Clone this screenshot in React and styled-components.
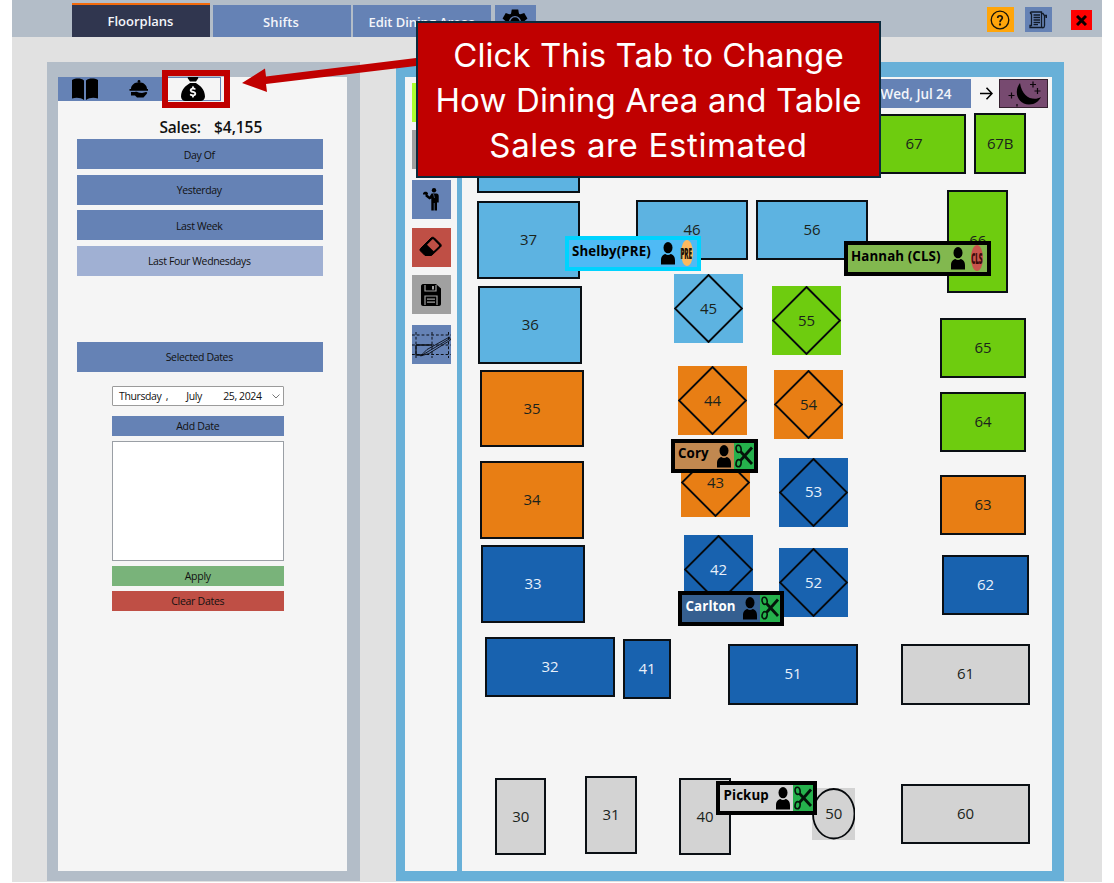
import React from "react";
import styled, { createGlobalStyle, css } from "styled-components";
import { FaSackDollar } from "react-icons/fa6";

const Global = createGlobalStyle`
  * { box-sizing: border-box; }
  body { margin: 0; background: #fff; overflow: hidden; }
  button { font: inherit; border: 0; padding: 0; margin: 0; color: inherit; }
  svg { display: block; flex: none; }
`;

const C = {
  steel: "#b3bdc8",
  blue: "#6582b5",
  navy: "#30364f",
  sky: "#68b0d8",
  panel: "#f5f5f5",
  red: "#bf4f45",
};

const Window = styled.div`
  position: relative;
  width: 1090px;
  height: 882px;
  margin-left: 12px;
  background: #e1e1e1;
  font-family: "Open Sans", "Noto Sans", sans-serif;
  color: #111;
`;
const TopBar = styled.header`
  display: flex;
  align-items: flex-end;
  height: 37px;
  padding-left: 60px;
  background: ${C.steel};
`;
const MainTab = styled.button`
  width: 138px;
  height: ${(p) => (p.$active ? 34.5 : 32)}px;
  margin-right: 2.5px;
  padding-top: ${(p) => (p.$active ? 1 : 2)}px;
  padding-right: 1px;
  border-top: ${(p) => (p.$active ? "2px solid #f26a0c" : "0")};
  background: ${(p) => (p.$active ? C.navy : C.blue)};
  color: #f3f5fa;
  font-size: 13px;
  font-weight: 600;
  letter-spacing: ${(p) => p.$track || 0}px;
`;
const GearTab = styled.button`
  width: 41px;
  height: 32px;
  margin-left: 1px;
  background: ${C.blue};
  display: flex;
  justify-content: center;
  padding-top: 4px;
  color: #000;
`;
const WindowTools = styled.div`
  display: flex;
  align-items: center;
  align-self: flex-start;
  margin: 7px 10.5px 0 auto;
`;
const WindowButton = styled.button`
  display: flex;
  align-items: center;
  justify-content: center;
  width: ${(p) => p.$w}px;
  height: ${(p) => p.$h}px;
  margin-left: ${(p) => p.$gap || 0}px;
  margin-top: ${(p) => p.$drop || 0}px;
  background: ${(p) => p.$bg};
`;
const Body = styled.main`
  display: flex;
  gap: 36px;
  padding: 25px 38px 0 34.5px;
`;
const Sidebar = styled.aside`
  width: 313.5px;
  height: 819px;
  border: solid ${C.steel};
  border-width: 15px 13.5px 10.5px 11.5px;
  background: ${C.panel};
`;
const SideTabs = styled.nav`
  display: flex;
  height: 24px;
`;
const SideTab = styled.button`
  display: flex;
  align-items: center;
  justify-content: center;
  width: ${(p) => p.$w}px;
  background: ${(p) => (p.$active ? C.panel : C.blue)};
  border: ${(p) => (p.$active ? `1px solid ${C.blue}` : "0")};
  color: #000;
`;
const SalesLine = styled.div`
  display: flex;
  gap: 13.5px;
  height: 38.4px;
  padding: 15px 0 0 102px;
  font-size: 15.5px;
  line-height: 22px;
  font-weight: 600;
  color: #111;
`;
const SalesLabel = styled.span`
  width: 41px;
  letter-spacing: -0.2px;
`;
const SalesValue = styled.span`
  letter-spacing: -0.05px;
`;
const RangeList = styled.div`
  display: flex;
  flex-direction: column;
  gap: 5.4px;
  padding: 0 24px 0 19px;
`;
const RangeButton = styled.button`
  height: 30px;
  background: ${(p) => (p.$pale ? "#a0b0d3" : C.blue)};
  font-size: 10.5px;
  font-weight: 500;
  letter-spacing: -0.36px;
  padding-right: 1px;
  padding-top: 1px;
  margin-top: ${(p) => p.$top || 0}px;
`;
const DateTools = styled.div`
  display: flex;
  flex-direction: column;
  width: 172.5px;
  margin: 14.5px 0 0 54px;
`;
const DatePicker = styled.div`
  display: flex;
  align-items: center;
  height: 20px;
  padding: 0 3px 0 6.5px;
  border: 1px solid #9b9b9b;
  border-radius: 1px;
  background: #fff;
  font-size: 10.5px;
  letter-spacing: -0.38px;
`;
const DatePart = styled.span`
  width: ${(p) => p.$w}px;
  white-space: nowrap;
`;
const DateButton = styled.button`
  height: 20px;
  margin-top: ${(p) => p.$top}px;
  background: ${(p) => p.$bg};
  font-size: 10.5px;
  font-weight: 500;
  letter-spacing: -0.28px;
`;
const DateList = styled.div`
  height: 120px;
  margin-top: 5px;
  border: 1px solid #9a9fa5;
  background: #fff;
`;
const Workspace = styled.section`
  display: flex;
  width: 668px;
  height: 819px;
  border: solid ${C.sky};
  border-width: 15px 12px 10.5px 9.5px;
  background: ${C.panel};
`;
const Tools = styled.div`
  display: flex;
  flex-direction: column;
  width: 56.5px;
  padding: 5.5px 0 0 6.5px;
  border-right: 5px solid ${C.sky};
`;
const Tool = styled.button`
  display: flex;
  align-items: center;
  justify-content: center;
  width: 39px;
  height: 39px;
  flex: none;
  margin-bottom: ${(p) => p.$gap}px;
  background: ${(p) => p.$bg};
`;
const Floor = styled.div`
  flex: 1;
`;
const FloorHeader = styled.div`
  display: flex;
  justify-content: flex-end;
  align-items: center;
  height: 31px;
  padding: 2px 4px 0 0;
`;
const DayButton = styled.button`
  width: 110px;
  height: 29px;
  background: ${C.blue};
  color: #f3f5fa;
  font-size: 13.5px;
  font-weight: 600;
  letter-spacing: -0.05px;
  padding-top: 1px;
`;
const NextDay = styled.div`
  width: 28px;
  display: flex;
  justify-content: center;
  padding-left: 2px;
`;
const NightButton = styled.button`
  width: 49px;
  height: 29px;
  background: #774a70;
  border: 1px solid #35202f;
`;
const Canvas = styled.div`
  position: relative;
  height: 762px;
`;
const Table = styled.div`
  position: absolute;
  display: flex;
  align-items: center;
  justify-content: center;
  background: ${(p) => p.$bg};
  color: ${(p) => (p.$light ? "#e8f0fa" : "#1b241c")};
  font-size: 15px;
  letter-spacing: -0.2px;
  padding: 0 0 2px 1px;
  ${(p) => p.$shape === "box" && css`
    border: 2px solid #0a0f14;
  `}
`;
const Outline = styled.svg`
  position: absolute;
  inset: 0;
`;
const TableNo = styled.span`
  position: relative;
`;
const Server = styled.div`
  position: absolute;
  display: flex;
  height: 34.5px;
  border: 4px solid ${(p) => p.$border || "#000"};
  background: ${(p) => p.$bg};
  color: ${(p) => (p.$light ? "#fff" : "#000")};
  font-size: 13.3px;
  line-height: 16px;
  font-weight: 700;
  letter-spacing: 0.12px;
  padding: 0 0 0 3.5px;
  white-space: nowrap;
`;
const ServerName = styled.span`
  flex: 1;
  padding-top: 2.5px;
`;
const PersonSlot = styled.span`
  width: 17px;
  padding: 2px 0 0 0;
`;
const Cut = styled.span`
  width: 20px;
  background: #25b14c;
`;
const Badge = styled.span`
  display: flex;
  align-items: center;
  justify-content: center;
  width: 12px;
  height: 26px;
  margin: 0 4px 0 3px;
  border-radius: 50%;
  background: ${(p) => p.$bg};
  color: ${(p) => p.$ink};
`;
const BadgeText = styled.span`
  flex: none;
  font-size: 16px;
  font-weight: 800;
  letter-spacing: -0.5px;
  transform: scaleX(0.4);
`;
const Highlight = styled.div`
  position: absolute;
  left: 150px;
  top: 70px;
  width: 68px;
  height: 38px;
  border: 6px solid #c00000;
`;
const ArrowLine = styled.svg`
  position: absolute;
  left: 228px;
  top: 50px;
`;
const Callout = styled.div`
  position: absolute;
  left: 404px;
  top: 21px;
  width: 465px;
  height: 157px;
  padding-top: 9.5px;
  border: 2px solid #0b2a3c;
  background: #c00000;
  color: #fff;
  font-family: Inter, "Liberation Sans", sans-serif;
  font-size: 33px;
  line-height: 45px;
  text-align: center;
  white-space: nowrap;
`;
const CalloutLine = styled.div`
  letter-spacing: ${(p) => p.$track}px;
`;

const GearIcon = () => (
  <svg width="26" height="26" viewBox="0 0 26 26">
    {[0, 60, 120].map((a) => (
      <path key={a} transform={`rotate(${a} 13 13)`} d="M9.800 0.500H16.200L17.200 6V20L16.200 25.500H9.800L8.800 20V6Z" />
    ))}
    <circle cx="13" cy="13" r="9.300" />
    <circle cx="13" cy="13" r="5.400" fill="none" stroke="#6582b5" strokeWidth="1.300" />
  </svg>
);
const BookIcon = () => (
  <svg width="26" height="22" viewBox="0 0 26 22">
    <path d="M0 2C4 0 9 0 12 2.500V22C9 19.500 4 19 0 20.500ZM14 2.500C17 0 22 0 26 2V20.500C22 19 17 19.500 14 22Z" />
  </svg>
);
const ServiceIcon = () => (
  <svg width="20" height="18" viewBox="0 0 20 18">
    <circle cx="10" cy="1.4" r="1.4" />
    <path d="M2 9C2 5 5.500 2.200 10 2.200S18 5 18 9ZM.5 9H19V10.800H.5ZM2 12H6C8 11.500 9 12.500 10.500 12.800L13 13L17 12C18.500 12 18.500 13.200 17.600 14L14.500 17.500H8L6 15.500H2Z" />
  </svg>
);
const HelpIcon = () => (
  <svg width="20" height="20" viewBox="0 0 20 20" fill="none" stroke="#17130a" strokeWidth="1.3">
    <circle cx="10" cy="10" r="8.800" />
    <path d="M7.700 8C7.700 5 12.500 5 12.300 8C12.200 9.700 10 9.700 10 12.200" strokeWidth="1.700" />
    <circle cx="10" cy="14.500" r=".5" />
  </svg>
);
const NotesIcon = () => (
  <svg width="18" height="18" viewBox="0 0 18 18" fill="none" stroke="#111a28" strokeWidth="1.300">
    <path d="M2.500 1H12.500V14.500C12.500 18 15.500 17 15.500 14.500V5M12.500 2.500H14L15.500 5M2.500 1C1 1 1 3 2.500 3V14.500H1V16.500H13.500M4.500 4H11M4.500 6.500H11M4.500 9H11M4.500 11.500H11M4.500 13.700H9" />
    <path d="M15 4.500H17.300V7" strokeWidth="1.600" />
  </svg>
);
const CloseIcon = () => (
  <svg width="11" height="11" viewBox="0 0 11 11" stroke="#0a0000" strokeWidth="3">
    <path d="M1 1L10 10M10 1L1 10" />
  </svg>
);
const WaiterIcon = () => (
  <svg width="17" height="23" viewBox="0 0 17 23">
    <circle cx="11" cy="2.300" r="2.200" />
    <path d="M8.500 5.500H13.500C15 5.500 15.700 6.500 15.700 8V14.500H14V22.500H11.500V15H10.800V22.500H8.300V10.500L6.500 11.500L2.500 8.500V6.500H0V5.500C.5 3 4.700 3 5 5.500V6.500H4L6.700 8.500Z" />
    <path d="M10.500 6L11.500 10" stroke="#6582b5" strokeWidth=".6" />
  </svg>
);
const EraserIcon = () => (
  <svg width="24" height="22" viewBox="0 0 24 22">
    <path d="M1.500 12.500L12 2C13 1 14.500 1 15.500 2L21.500 8C22.500 9 22.500 10 21.500 11L12.500 19.500H6L1.500 15C.8 14.300.8 13.200 1.500 12.500Z" stroke="#000" strokeWidth="1" />
    <path d="M8 8.700L13.200 3.500C13.600 3.200 14.100 3.200 14.500 3.500L19.900 9C20.300 9.400 20.300 10 19.900 10.300L14.700 15.200Z" fill="#bf4f45" />
  </svg>
);
const SaveIcon = () => (
  <svg width="20" height="22" viewBox="0 0 20 22">
    <path d="M2 0H15L20 4.500V20C20 21 19 22 18 22H2C1 22 0 21 0 20V2C0 1 1 0 2 0Z" />
    <path d="M4 1V7H15V1M4 21V12H16V21" fill="none" stroke="#a0a0a0" strokeWidth="1.200" />
    <path d="M11 2H13V5.500H11ZM6 14.500H14V15.700H6ZM6 17.500H14V18.700H6Z" fill="#a0a0a0" />
  </svg>
);
const PlanIcon = () => (
  <svg width="39" height="39" viewBox="0 0 39 39" fill="none" stroke="#0b0f16">
    <path d="M0 10H39M0 20H39M0 29.500H39M4 7V33M20 7V33M36.500 7V33" strokeDasharray="2.800 2" />
    <path d="M4 20H20M4 20V30H11" strokeWidth="1.300" />
    <path d="M8.500 31L15 24.500L37.500 12L38.500 15L17 28.500ZM12 29L38 13.500" strokeWidth=".9" />
  </svg>
);
const MoonIcon = () => (
  <svg width="47" height="27" viewBox="0 0 47 27">
    <path d="M20 3C13 12 18 24.500 29 24.500C35 24.500 39 21 41 17C34 21.500 22 18 20 3Z" />
    <path d="M33 1.500V7.500M30 4.500H36M37.500 8V14M34.500 11H40.500M11.500 12.500V18.500M8.500 15.500H14.500M17 24V26.500" stroke="#0c060b" strokeWidth="1.200" />
  </svg>
);
const PersonIcon = () => (
  <svg width="14" height="23" viewBox="0 0 14 23">
    <ellipse cx="7" cy="5.700" rx="4.500" ry="5.600" />
    <path d="M0 22.500V18.500C0 14.500 2 12.500 4.300 12C6 13.200 8 13.200 9.700 12C12 12.500 14 14.500 14 18.500V22.500Z" />
  </svg>
);
const ScissorsIcon = () => (
  <svg width="20" height="26" viewBox="0 0 20 26" fill="none" stroke="#04140a">
    <ellipse cx="4.600" cy="5.800" rx="2.500" ry="3.600" strokeWidth="1.600" transform="rotate(-12 4.600 5.800)" />
    <ellipse cx="4.600" cy="20.200" rx="2.500" ry="3.600" strokeWidth="1.600" transform="rotate(12 4.600 20.200)" />
    <path d="M6.500 8.500L18 21M6.500 17.500L18 4.500" strokeWidth="2.800" />
  </svg>
);

const COLORS = { sky: "#5db3e1", green: "#6ecc0f", orange: "#e87e14", blue: "#1862af", gray: "#d3d3d3" };

// Screen position of the floor canvas; tables are stored in screen units.
const ORIGIN = { x: 462, y: 108 };

const TABLES = [
  ["", 477, 115, 103, 77.5, "sky"],
  ["37", 477, 201.4, 103, 77.5, "sky"],
  ["36", 478.5, 286, 103.5, 77.5, "sky"],
  ["35", 480, 370, 104, 77, "orange"],
  ["34", 480, 461, 104, 77.5, "orange"],
  ["33", 481, 545, 104, 77.5, "blue"],
  ["32", 485, 637, 130, 60, "blue"],
  ["41", 623, 638.5, 48, 60, "blue"],
  ["46", 636, 200, 112, 60, "sky"],
  ["56", 756, 200, 112, 60, "sky"],
  ["45", 674, 274, 69, 69, "sky", "diamond"],
  ["55", 772, 286, 69, 69, "green", "diamond"],
  ["44", 678, 366, 69, 69, "orange", "diamond"],
  ["54", 774, 370, 69, 69, "orange", "diamond"],
  ["43", 681, 448, 69, 69, "orange", "diamond"],
  ["53", 779, 457.5, 69, 69, "blue", "diamond"],
  ["42", 684, 535, 69, 69, "blue", "diamond"],
  ["52", 779, 548, 69, 69, "blue", "diamond"],
  ["67", 862, 114.4, 104, 60, "green"],
  ["67B", 974, 113, 52, 61, "green"],
  ["66", 947.5, 189.5, 60.5, 103, "green"],
  ["65", 940, 318, 86, 60, "green"],
  ["64", 940, 392, 86, 60, "green"],
  ["63", 940, 475.4, 86, 60, "orange"],
  ["62", 942, 555, 87, 60, "blue"],
  ["51", 728, 644, 130, 60.5, "blue"],
  ["61", 901, 644, 129, 60.5, "gray"],
  ["60", 901, 783.5, 129, 60.5, "gray"],
  ["30", 495, 778, 51.5, 77, "gray"],
  ["31", 585, 776, 52, 77.5, "gray"],
  ["40", 679, 778, 52, 77, "gray"],
  ["50", 812, 788, 43.5, 51.5, "gray", "round"],
];

const SERVERS = [
  { name: "Shelby(PRE)", x: 565, y: 236, w: 136, bg: "#4fbaf5", border: "#00d3ff", badge: "PRE", badgeBg: "#fdb95f", ink: "#1c1206" },
  { name: "Hannah (CLS)", x: 844, y: 241, w: 147, bg: "#82b84f", badge: "CLS", badgeBg: "#c9544c", ink: "#3b0909" },
  { name: "Cory", x: 671, y: 438.5, w: 87, bg: "#c18850" },
  { name: "Carlton", x: 678.5, y: 591, w: 105.5, bg: "#355f90", light: true },
  { name: "Pickup", x: 716.5, y: 780.5, w: 101, bg: "#d3d3d3" },
];

function FloorTable({ data }) {
  const [no, x, y, w, h, color, shape = "box"] = data;
  return (
    <Table $bg={COLORS[color]} $light={color === "blue"} $shape={shape}
      style={{ left: x - ORIGIN.x, top: y - ORIGIN.y, width: w, height: h }}>
      {shape === "diamond" && (
        <Outline width={w} height={h} fill="none" stroke="#06090c" strokeWidth="1.9">
          <path d={`M${w / 2} 1L${w - 1} ${h / 2}L${w / 2} ${h - 1}L1 ${h / 2}Z`} />
        </Outline>
      )}
      {shape === "round" && (
        <Outline width={w} height={h} fill="none" stroke="#06090c" strokeWidth="1.8">
          <ellipse cx={w / 2} cy={h / 2} rx={w / 2 - 1} ry={h / 2 - 1} />
        </Outline>
      )}
      {no && <TableNo>{no}</TableNo>}
    </Table>
  );
}

function ServerTag({ s }) {
  return (
    <Server $bg={s.bg} $border={s.border} $light={s.light}
      style={{ left: s.x - ORIGIN.x, top: s.y - ORIGIN.y, width: s.w }}>
      <ServerName>{s.name}</ServerName>
      <PersonSlot><PersonIcon /></PersonSlot>
      {s.badge
        ? <Badge $bg={s.badgeBg} $ink={s.ink}><BadgeText>{s.badge}</BadgeText></Badge>
        : <Cut><ScissorsIcon /></Cut>}
    </Server>
  );
}

export default function App() {
  return (
    <Window>
      <Global />
      <TopBar>
        <MainTab $active>Floorplans</MainTab>
        <MainTab $track={0.1}>Shifts</MainTab>
        <MainTab $track={-0.05}>Edit Dining Areas</MainTab>
        <GearTab><GearIcon /></GearTab>
        <WindowTools>
          <WindowButton $w={27} $h={25} $bg="#ffa50a"><HelpIcon /></WindowButton>
          <WindowButton $w={27} $h={25} $gap={11} $bg={C.blue}><NotesIcon /></WindowButton>
          <WindowButton $w={20.5} $h={20} $gap={19.5} $drop={1} $bg="#fe0000"><CloseIcon /></WindowButton>
        </WindowTools>
      </TopBar>
      <Body>
        <Sidebar>
          <SideTabs>
            <SideTab $w={54}><BookIcon /></SideTab>
            <SideTab $w={54}><ServiceIcon /></SideTab>
            <SideTab $w={55} $active><FaSackDollar size={24} /></SideTab>
          </SideTabs>
          <SalesLine><SalesLabel>Sales:</SalesLabel><SalesValue>$4,155</SalesValue></SalesLine>
          <RangeList>
            <RangeButton>Day Of</RangeButton>
            <RangeButton>Yesterday</RangeButton>
            <RangeButton>Last Week</RangeButton>
            <RangeButton $pale>Last Four Wednesdays</RangeButton>
            <RangeButton $top={61}>Selected Dates</RangeButton>
          </RangeList>
          <DateTools>
            <DatePicker>
              <DatePart $w={47}>Thursday</DatePart>
              <DatePart $w={20.5}>,</DatePart>
              <DatePart $w={37}>July</DatePart>
              <DatePart $w={49}>25, 2024</DatePart>
              <svg width="8" height="5" viewBox="0 0 8 5" fill="none" stroke="#777"><path d="M.5.5L4 4L7.500.5" /></svg>
            </DatePicker>
            <DateButton $top={9.5} $bg={C.blue}>Add Date</DateButton>
            <DateList />
            <DateButton $top={5} $bg="#79b37a">Apply</DateButton>
            <DateButton $top={5} $bg={C.red}>Clear Dates</DateButton>
          </DateTools>
        </Sidebar>
        <Workspace>
          <Tools>
            <Tool $gap={8.5} $bg="#adff2f" />
            <Tool $gap={11} $bg="#a0a0a0" />
            <Tool $gap={8.5} $bg={C.blue}><WaiterIcon /></Tool>
            <Tool $gap={8.5} $bg={C.red}><EraserIcon /></Tool>
            <Tool $gap={11} $bg="#a0a0a0"><SaveIcon /></Tool>
            <Tool $gap={0} $bg={C.blue}><PlanIcon /></Tool>
          </Tools>
          <Floor>
            <FloorHeader>
              <DayButton>Wed, Jul 24</DayButton>
              <NextDay>
                <svg width="13" height="13" viewBox="0 0 13 13" fill="none" stroke="#000" strokeWidth="1.600"><path d="M0 6.500H11.500M6.500 .8L12 6.500L6.500 12.200" /></svg>
              </NextDay>
              <NightButton><MoonIcon /></NightButton>
            </FloorHeader>
            <Canvas>
              {TABLES.map((t) => <FloorTable key={t[0] || "edge"} data={t} />)}
              {SERVERS.map((s) => <ServerTag key={s.name} s={s} />)}
            </Canvas>
          </Floor>
        </Workspace>
      </Body>
      <Highlight />
      <ArrowLine width="180" height="50" viewBox="0 0 180 50">
        <path d="M176 8L176 16L26 34L27 42L2 33L25 18.500L26 26.500Z" fill="#c00000" />
      </ArrowLine>
      <Callout>
        <CalloutLine $track={0.04}>Click This Tab to Change</CalloutLine>
        <CalloutLine $track={0.14}>How Dining Area and Table</CalloutLine>
        <CalloutLine $track={0.65}>Sales are Estimated</CalloutLine>
      </Callout>
    </Window>
  );
}
